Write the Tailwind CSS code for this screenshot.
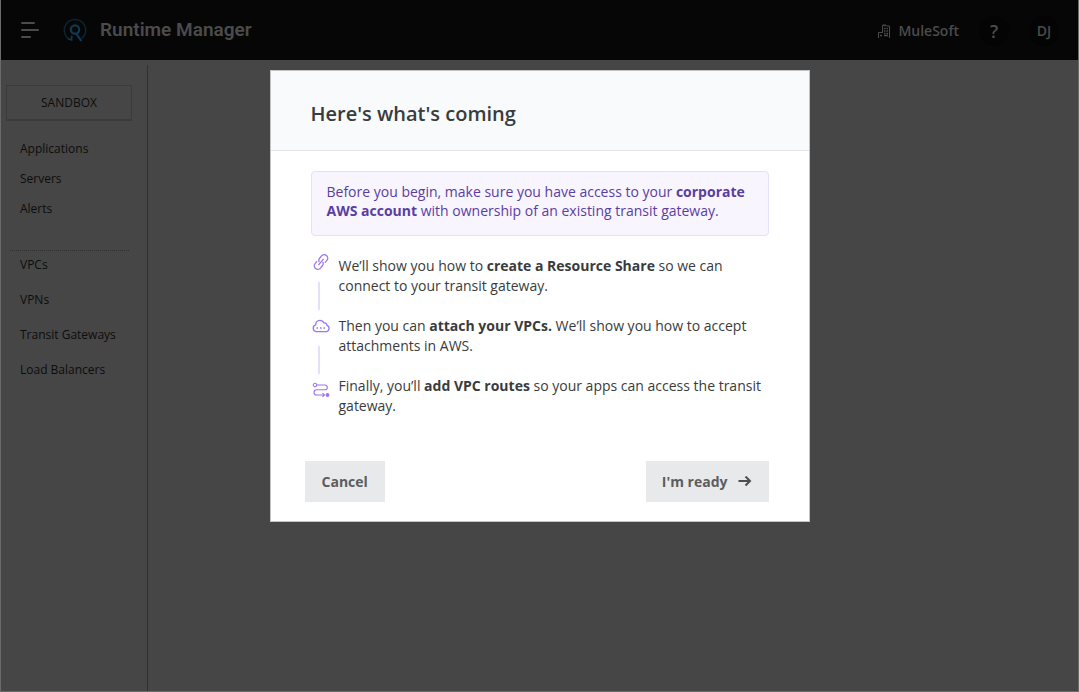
<!DOCTYPE html>
<html lang="en">
<head>
<meta charset="utf-8">
<meta name="viewport" content="width=device-width, initial-scale=1">
<title>Runtime Manager</title>
<script src="https://cdn.jsdelivr.net/npm/@tailwindcss/browser@4"></script>
</head>
<body class="bg-[#464646] font-['Open_Sans','Noto_Sans',sans-serif]">
<div class="flex min-h-screen flex-col border-x border-b border-[#6a6a6a]">
  <header class="flex h-[60px] items-center bg-[#060606] pr-[19px] pl-5 text-[#4b4b4b]">
    <button type="button" aria-label="Open navigation" class="mr-6">
      <svg class="block h-[18px] w-[18px]" viewBox="0 0 18 18" fill="none" stroke="#4b4b4b" stroke-width="2" stroke-linecap="round"><path d="M1 2h12M1 9h16M1 16h8"/></svg>
    </button>
    <a href="#" class="flex items-center gap-[13px] font-['Roboto',sans-serif] text-[19px] font-semibold">
      <svg class="h-6 w-6" viewBox="0 0 24 24" fill="none">
        <path d="M5.500 20.700A10.700 10.700 0 1 1 18.500 20.700" stroke="#0c2433" stroke-width="1.500"/>
        <circle cx="12" cy="11.500" r="4.200" stroke="#10394f" stroke-width="2.200"/>
        <path d="M13 15.300l5.300 7.700" stroke="#10394f" stroke-width="2.200"/>
        <path d="M8.700 17.500v5.200M8.700 22l-4-1.500" stroke="#10394f" stroke-width="1.600"/>
      </svg>
      Runtime Manager
    </a>
    <div class="ml-auto flex items-center pt-[2px] text-sm font-semibold">
      <button type="button" class="mr-5 flex items-center gap-2">
        <svg class="h-[14px] w-3" viewBox="0 0 12 14" fill="none" stroke="#4b4b4b"><path d="M.5 14V8.500H4.500M4.500 9V1.500L11.500 2V14M4.500 1L8 1"/><path d="M6 4.500h1.500m1 0h1.500M6 7h1.500m1 0h1.500M6 9.500h1.500m1 0h1.500M2 11.500h2M6 11.500h4" stroke-width="1.300"/></svg>
        MuleSoft
      </button>
      <button type="button" aria-label="Help" class="mr-5 flex h-[30px] w-[30px] items-center justify-center rounded-full bg-[#040404] text-lg">?</button>
      <button type="button" aria-label="Account" class="flex h-[30px] w-[30px] items-center justify-center rounded-full bg-[#040404]">DJ</button>
    </div>
  </header>
  <div class="flex flex-1 pt-[5px]">
    <aside class="w-[147px] border-r border-[#303030] pt-5 pr-[15px] pl-[5px] text-xs text-[#0d0d0d]">
      <button type="button" class="h-9 w-full border border-b-2 border-[#3b3b3b]">SANDBOX</button>
      <nav aria-label="Main" class="pt-[13px]">
        <a href="#" class="block pl-[14px] leading-[30px]">Applications</a>
        <a href="#" class="block pl-[14px] leading-[30px]">Servers</a>
        <a href="#" class="block pl-[14px] leading-[30px]">Alerts</a>
        <hr class="mt-[26px] mr-[3px] mb-[-4px] ml-1 border-t border-dotted border-[#303030]">
        <a href="#" class="block pl-[14px] leading-[35px]">VPCs</a>
        <a href="#" class="block pl-[14px] leading-[35px]">VPNs</a>
        <a href="#" class="block pl-[14px] leading-[35px]">Transit Gateways</a>
        <a href="#" class="block pl-[14px] leading-[35px]">Load Balancers</a>
      </nav>
    </aside>
    <main class="flex-1"></main>
  </div>
</div>

<div class="fixed inset-0 flex items-start justify-center overflow-auto pt-[70px]">
  <section role="dialog" aria-modal="true" aria-labelledby="dialog-title" class="w-full max-w-[540px] border border-[#c4c4c4] bg-white text-sm text-[#3a3b3c]">
    <header class="border-b border-[#e3e4e6] bg-[#f9fafc] px-10 pt-[29px] pb-[22px]">
      <h1 id="dialog-title" class="text-xl font-semibold">Here's what's coming</h1>
    </header>
    <div class="px-10 pt-5">
      <p class="rounded border border-[#e6defc] bg-[#f8f5ff] px-[15px] pt-[10px] pb-[15px] leading-[19px] text-[#5a3e9f]">Before you begin, make sure you have access to your <strong>corporate AWS account</strong> with ownership of an existing transit gateway.</p>
      <div class="flex gap-2 pt-[18px]">
        <div class="flex w-5 shrink-0 flex-col items-start pl-px" aria-hidden="true">
          <svg class="h-4 w-[18px]" viewBox="0 0 18 16" fill="none" stroke="#9d74ee" stroke-width="1.300" stroke-linecap="round" stroke-linejoin="round"><g transform="translate(9 8) rotate(-50)"><path d="M-2.500 -3.500H-5a3.500 3.500 0 0 0 0 7H-2a3.500 3.500 0 0 0 3-1.800M2.500 3.500H5a3.500 3.500 0 0 0 0-7H2a3.500 3.500 0 0 0-3 1.800M-3.500 0H3.500"/></g></svg>
          <span class="mt-3 mb-2 ml-[6px] h-7 w-[2px] bg-[#e7e0fb]"></span>
          <svg class="h-4 w-[18px]" viewBox="0 0 18 16" fill="none" stroke="#9d74ee" stroke-width="1.300"><path d="M4.200 13.700a3.500 3.500 0 0 1-.5-6.800C3.600 4.200 5.300 2.300 7.800 2.300c1.900 0 3.300 1 4 2.500 2-.2 3.200.9 3.200 2.600a3.300 3.300 0 0 1-.6 6.300z"/><path d="M4.500 10H6M8 10h1.500M11.500 10H13" stroke-width="1.600"/></svg>
          <span class="mt-3 mb-2 ml-[6px] h-7 w-[2px] bg-[#e7e0fb]"></span>
          <svg class="h-4 w-[18px]" viewBox="0 0 18 16" fill="none" stroke="#9d74ee" stroke-width="1.100"><circle cx="3" cy="3" r="1.700"/><path d="M4.700 3h8.200a2.400 2.400 0 0 1 0 4.800H4.600a2.600 2.600 0 0 0 0 5.200H12M10.500 11.200l2 1.800-2 1.800"/><circle cx="15.500" cy="13" r="1.900" fill="#9d74ee" stroke="none"/></svg>
        </div>
        <ol class="space-y-5 pt-[2px] leading-5">
          <li>We’ll show you how to <strong>create a Resource Share</strong> so we can connect to your transit gateway.</li>
          <li>Then you can <strong>attach your VPCs.</strong> We’ll show you how to accept attachments in AWS.</li>
          <li>Finally, you’ll <strong>add VPC routes</strong> so your apps can access the transit gateway.</li>
        </ol>
      </div>
    </div>
    <footer class="flex justify-between pt-[45px] pr-10 pb-[19px] pl-[34px] font-bold text-[#5c5d5f]">
      <button type="button" class="h-[41px] bg-[#e8e9ea] px-[17px]">Cancel</button>
      <button type="button" class="flex h-[41px] items-center gap-[10px] bg-[#e8e9ea] pr-[17px] pl-4">I'm ready
        <svg class="h-3 w-[14px]" viewBox="0 0 14 12" fill="none" stroke="#4d4e50" stroke-width="2"><path d="M.5 5H11.500M7.500 .5l4.500 4.500L7.500 9.500"/></svg>
      </button>
    </footer>
  </section>
</div>
</body>
</html>
